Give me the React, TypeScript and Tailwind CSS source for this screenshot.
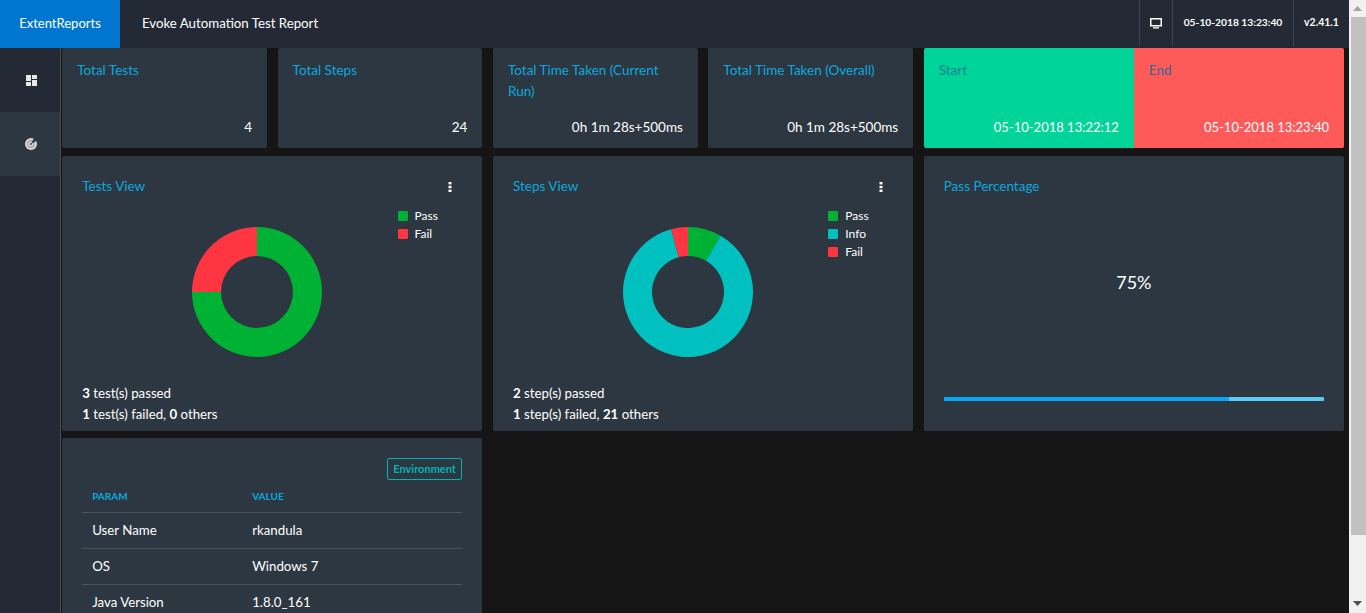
import React from "react";

const TITLE = "text-[13.5px] text-[#0aa9df]";

function polar(cx: number, cy: number, r: number, frac: number) {
  const a = frac * Math.PI * 2 - Math.PI / 2;
  return [cx + r * Math.cos(a), cy + r * Math.sin(a)];
}

function Donut({ slices }: { slices: { value: number; color: string }[] }) {
  const total = slices.reduce((s, x) => s + x.value, 0);
  let acc = 0;
  return (
    <svg width="130" height="130" viewBox="0 0 130 130">
      {slices.map((s) => {
        const from = acc / total;
        acc += s.value;
        const to = acc / total;
        const [x1, y1] = polar(65, 65, 65, from);
        const [x2, y2] = polar(65, 65, 65, to);
        const [x3, y3] = polar(65, 65, 36, to);
        const [x4, y4] = polar(65, 65, 36, from);
        const large = to - from > 0.5 ? 1 : 0;
        return (
          <path
            key={s.color}
            fill={s.color}
            d={`M${x1} ${y1}A65 65 0 ${large} 1 ${x2} ${y2}L${x3} ${y3}A36 36 0 ${large} 0 ${x4} ${y4}Z`}
          />
        );
      })}
    </svg>
  );
}

function StatCard({ title, value }: { title: string; value: string }) {
  return (
    <div className="col-span-2 flex flex-col justify-between rounded-[2px] bg-[#2d3741] px-[15px] pt-[12px] pb-[11px]">
      <div className={`${TITLE} leading-[21px]`}>{title}</div>
      <div className="text-right text-[13.5px] leading-[20px] text-white">{value}</div>
    </div>
  );
}

function ChartCard({
  title,
  slices,
  line1,
  line2,
}: {
  title: string;
  slices: { label: string; value: number; color: string }[];
  line1: React.ReactNode;
  line2: React.ReactNode;
}) {
  return (
    <div className="relative col-span-4 flex flex-col rounded-[2px] bg-[#2d3741] px-[20px] pt-[20px]">
      <div className="flex items-center justify-between">
        <div className={`${TITLE} leading-[20px]`}>{title}</div>
        <svg width="4" height="12" viewBox="0 0 4 12" className="mr-[10px] mt-[2px]">
          <rect x="0.5" y="1" width="3" height="2.4" fill="#fff" />
          <rect x="0.5" y="4.8" width="3" height="2.4" fill="#fff" />
          <rect x="0.5" y="8.6" width="3" height="2.4" fill="#fff" />
        </svg>
      </div>
      <div className="mt-[31px] flex justify-center pr-[30px]">
        <Donut slices={slices} />
      </div>
      <div className="absolute left-[335.4px] top-[55px] flex flex-col gap-[8px]">
        {slices.map((s) => (
          <div key={s.label} className="flex h-[10px] items-center gap-[7px] text-[12px] text-white">
            <span className="h-[10px] w-[10px] rounded-[1px]" style={{ backgroundColor: s.color }} />
            {s.label}
          </div>
        ))}
      </div>
      <div className="mt-[26px] text-[13.25px] leading-[21px] text-white">
        <div>{line1}</div>
        <div>{line2}</div>
      </div>
    </div>
  );
}

function EnvRow({ param, value }: { param: string; value: string }) {
  return (
    <div className="flex h-[36px] items-center border-t border-[#4a535c] pl-[10px] text-[13.25px] text-white">
      <div className="w-[160px]">{param}</div>
      <div>{value}</div>
    </div>
  );
}

export default function App() {
  const pass = "#00b233";
  const fail = "#ff3642";
  const info = "#00c0c0";
  return (
    <div className="flex h-[613px] w-[1366px] overflow-hidden bg-[#151515] font-['Lato','Liberation_Sans',sans-serif]">
      <div className="flex min-w-0 flex-1 flex-col">
        {/* top nav */}
        <div className="flex h-[48px] flex-none items-center bg-[#232a35] text-white">
          <div className="flex h-full w-[120px] items-center justify-center bg-[#0076d1] text-[13px]">ExtentReports</div>
          <div className="ml-[22px] flex-1 text-[13.25px]">Evoke Automation Test Report</div>
          <div className="flex h-[46px] self-start text-[10.25px] font-bold">
            <div className="flex w-[33px] items-center justify-center border-l border-[#3d454f]">
              <svg width="12" height="11" viewBox="0 0 12 11" fill="none">
                <rect x="0.75" y="0.75" width="10.5" height="7" stroke="#fff" strokeWidth="1.5" />
                <rect x="3" y="9.2" width="6" height="1.3" fill="#fff" />
              </svg>
            </div>
            <div className="flex w-[121px] items-center justify-center border-l border-[#3d454f]">05-10-2018 13:23:40</div>
            <div className="flex w-[56px] items-center justify-center border-l border-[#3d454f] text-[10.5px]">v2.41.1</div>
          </div>
        </div>

        <div className="flex min-h-0 flex-1">
          {/* sidebar */}
          <div className="w-[61px] flex-none border-r-[1px] border-[#4a4f55] bg-[#232a35]">
            <div className="flex h-[64px] items-center justify-center pl-[2px]">
              <svg width="11" height="11" viewBox="0 0 11 11" fill="#e8e8e8">
                <rect x="0" y="0" width="5" height="6" />
                <rect x="6" y="0" width="5" height="4" />
                <rect x="0" y="7" width="5" height="4" />
                <rect x="6" y="5" width="5" height="6" />
              </svg>
            </div>
            <div className="flex h-[64px] items-center justify-center bg-[#2d3741] pl-[2px]">
              <svg width="12" height="12" viewBox="0 0 12 12">
                <circle cx="6" cy="6" r="6" fill="#d8d8d8" />
                <circle cx="6" cy="6" r="3.4" fill="none" stroke="#6f777e" strokeWidth="0.8" />
                <circle cx="6" cy="6" r="1.2" fill="#6f777e" />
                <path d="M6 6L9 0L12 2.5Z" fill="#2d3741" />
              </svg>
            </div>
          </div>

          {/* content */}
          <div className="grid min-w-0 flex-1 grid-cols-12 grid-rows-[100px_275px_1fr] gap-x-[10.5px] gap-y-[7.5px] pl-[1.2px] pr-[5px]">
            <StatCard title="Total Tests" value="4" />
            <StatCard title="Total Steps" value="24" />
            <StatCard title="Total Time Taken (Current Run)" value="0h 1m 28s+500ms" />
            <StatCard title="Total Time Taken (Overall)" value="0h 1m 28s+500ms" />
            <div className="col-span-4 flex overflow-hidden rounded-[2px] text-white">
              <div className="flex flex-1 flex-col justify-between bg-[#00d498] px-[15px] pt-[12px] pb-[11px]">
                <div className="text-[13.5px] leading-[21px] text-[#0d8293]">Start</div>
                <div className="text-right text-[13px] leading-[20px]">05-10-2018 13:22:12</div>
              </div>
              <div className="flex flex-1 flex-col justify-between bg-[#ff5a5a] px-[15px] pt-[12px] pb-[11px]">
                <div className="text-[13.5px] leading-[21px] text-[#2f6a98]">End</div>
                <div className="text-right text-[13px] leading-[20px]">05-10-2018 13:23:40</div>
              </div>
            </div>

            <ChartCard
              title="Tests View"
              slices={[
                { label: "Pass", value: 3, color: pass },
                { label: "Fail", value: 1, color: fail },
              ]}
              line1={
                <>
                  <b>3</b> test(s) passed
                </>
              }
              line2={
                <>
                  <b>1</b> test(s) failed, <b>0</b> others
                </>
              }
            />
            <ChartCard
              title="Steps View"
              slices={[
                { label: "Pass", value: 2, color: pass },
                { label: "Info", value: 21, color: info },
                { label: "Fail", value: 1, color: fail },
              ]}
              line1={
                <>
                  <b>2</b> step(s) passed
                </>
              }
              line2={
                <>
                  <b>1</b> step(s) failed, <b>21</b> others
                </>
              }
            />
            <div className="col-span-4 flex flex-col rounded-[2px] bg-[#2d3741] px-[20px] pt-[20px]">
              <div className={`${TITLE} leading-[20px]`}>Pass Percentage</div>
              <div className="mt-[74px] text-center text-[18px] leading-[24px] text-white">75%</div>
              <div className="mt-[103px] flex h-[4px] overflow-hidden rounded-[1px] bg-[#5bcdf5]">
                <div className="w-[75%] bg-[#03a9f4]" />
              </div>
            </div>

            <div className="col-span-4 rounded-t-[2px] bg-[#2d3741] px-[20px] pt-[20px]">
              <div className="flex justify-end">
                <div className="flex h-[22px] items-center rounded-[2px] border border-[#00b4b4] px-[5.5px] text-[11px] font-bold text-[#00b4b4]">
                  Environment
                </div>
              </div>
              <div className="flex h-[32px] items-center pl-[10px] text-[10px] font-bold text-[#0aa9df]">
                <div className="w-[160px]">PARAM</div>
                <div>VALUE</div>
              </div>
              <EnvRow param="User Name" value="rkandula" />
              <EnvRow param="OS" value="Windows 7" />
              <EnvRow param="Java Version" value="1.8.0_161" />
            </div>
          </div>
        </div>
      </div>

      {/* scrollbar */}
      <div className="flex w-[17px] flex-none flex-col items-center bg-[#f1f1f1]">
        <div className="flex h-[17px] items-center justify-center">
          <svg width="9" height="5" viewBox="0 0 9 5">
            <path d="M0 5L4.5 0L9 5Z" fill="#a3a3a3" />
          </svg>
        </div>
        <div className="h-[518px] w-[15px] self-end bg-[#c1c1c1]" />
        <div className="flex flex-1 items-end justify-center pb-[7px]">
          <svg width="9" height="5" viewBox="0 0 9 5">
            <path d="M0 0L4.5 5L9 0Z" fill="#505050" />
          </svg>
        </div>
      </div>
    </div>
  );
}
